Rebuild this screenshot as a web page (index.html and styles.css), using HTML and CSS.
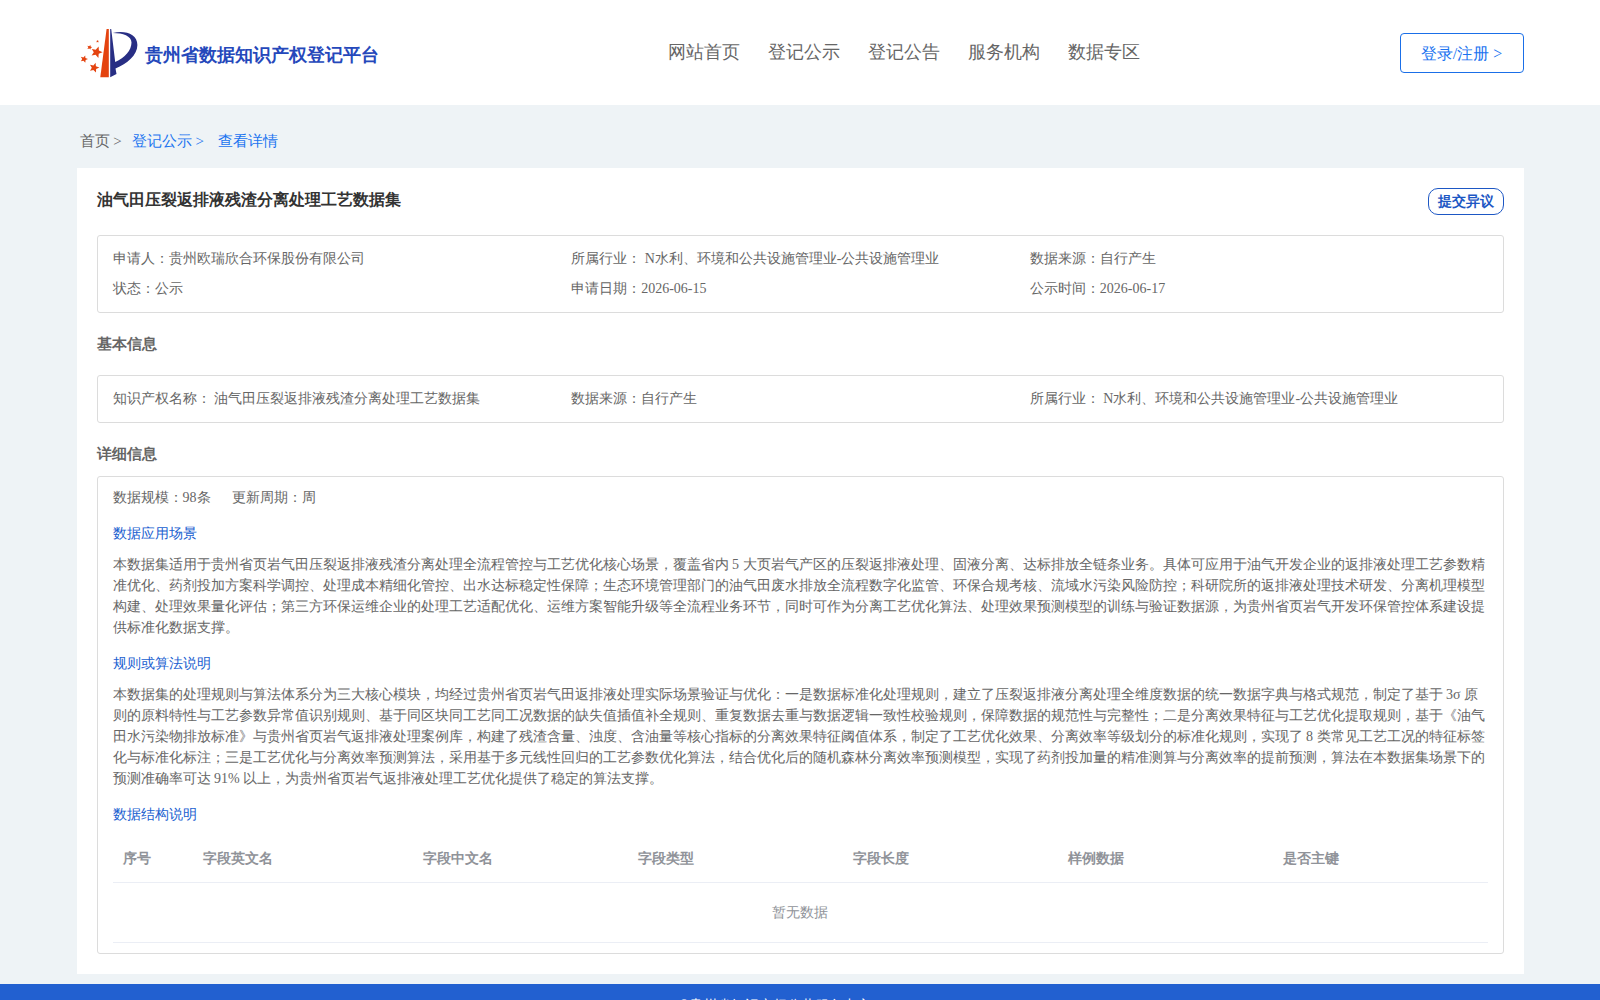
FILE: index.html
```html
<!DOCTYPE html>
<html lang="en">
<head>
  <meta charset="UTF-8">
  <title>贵州省数据知识产权登记平台</title>
  <meta name="viewport" content="width=device-width, initial-scale=1" />
  <link rel="stylesheet" href="styles.css">
</head>
<body>

<header class="header">
  <div class="header-inner">
    <a class="logo" href="#">
      <svg width="58" height="50" viewBox="0 0 58 50">
        <path fill="#e4430f" d="M26.6 1 L28.8 1 L28.8 49.3 L20.3 49.3 Z"/>
        <path fill="#282e84" d="M30.2 1 L31.2 1 L35.2 34 C45 30 51.5 22 51.5 14.5 C51.5 8 43 5 32.8 5 C45 2 57.4 6 57.4 17 C57.4 27 47 36 35.5 40.5 L36.5 46 L30.2 49.3 Z"/>
        <g fill="#e4430f">
          <path d="M18.6 18.4 L18.9 22.6 L22.6 24.2 L18.7 25.7 L18.4 30 L15.6 26.8 L11.6 27.6 L13.8 24.2 L11.8 20.9 L15.7 21.8 Z"/>
          <path d="M15.6 34.8 L15.9 38.2 L19.4 39.5 L16.1 40.9 L16 44.6 L13.4 41.9 L10 42.8 L11.8 39.7 L10 36.7 L13.4 37.5 Z"/>
          <path d="M5.2 27.4 L5.4 30 L8 31 L5.6 32.1 L5.3 34.8 L3.5 32.7 L.9 33.3 L2.2 31 L.8 28.8 L3.4 29.4 Z"/>
          <path d="M10.4 17 L10.6 18.6 L12.2 19.2 L10.7 20 L10.5 21.6 L9.3 20.4 L7.4 20.9 L8.3 19.3 L7.3 17.7 L9.1 18.2 Z"/>
          <path d="M17.6 12 L18 12.8 L19 13 L18.2 13.6 L18.4 14.4 L17.5 14 L16.6 14.4 L16.8 13.5 L16.2 12.9 L17.2 12.8 Z"/>
        </g>
      </svg>
      <span class="logo-text">贵州省数据知识产权登记平台</span>
    </a>
    <nav class="nav">
      <a href="#">网站首页</a>
      <a href="#">登记公示</a>
      <a href="#">登记公告</a>
      <a href="#">服务机构</a>
      <a href="#">数据专区</a>
    </nav>
    <a class="login" href="#">登录/注册 &gt;</a>
  </div>
</header>

<div class="crumbs">
  <span>首页 &gt;</span>
  <a href="#">登记公示 &gt;</a>
  <a class="current" href="#">查看详情</a>
</div>

<main class="card">
  <div class="title-row">
    <h1>油气田压裂返排液残渣分离处理工艺数据集</h1>
    <button class="objection">提交异议</button>
  </div>

  <div class="box grid">
    <div>申请人：贵州欧瑞欣合环保股份有限公司</div>
    <div>所属行业： N水利、环境和公共设施管理业-公共设施管理业</div>
    <div>数据来源：自行产生</div>
    <div>状态：公示</div>
    <div>申请日期：2026-06-15</div>
    <div>公示时间：2026-06-17</div>
  </div>

  <h2>基本信息</h2>
  <div class="box grid basic">
    <div>知识产权名称： 油气田压裂返排液残渣分离处理工艺数据集</div>
    <div>数据来源：自行产生</div>
    <div>所属行业： N水利、环境和公共设施管理业-公共设施管理业</div>
  </div>

  <h2>详细信息</h2>
  <div class="box detail">
    <div class="scale"><span>数据规模：98条</span><span>更新周期：周</span></div>

    <h3>数据应用场景</h3>
    <p>本数据集适用于贵州省页岩气田压裂返排液残渣分离处理全流程管控与工艺优化核心场景，覆盖省内 5 大页岩气产区的压裂返排液处理、固液分离、达标排放全链条业务。具体可应用于油气开发企业的返排液处理工艺参数精准优化、药剂投加方案科学调控、处理成本精细化管控、出水达标稳定性保障；生态环境管理部门的油气田废水排放全流程数字化监管、环保合规考核、流域水污染风险防控；科研院所的返排液处理技术研发、分离机理模型构建、处理效果量化评估；第三方环保运维企业的处理工艺适配优化、运维方案智能升级等全流程业务环节，同时可作为分离工艺优化算法、处理效果预测模型的训练与验证数据源，为贵州省页岩气开发环保管控体系建设提供标准化数据支撑。</p>

    <h3>规则或算法说明</h3>
    <p>本数据集的处理规则与算法体系分为三大核心模块，均经过贵州省页岩气田返排液处理实际场景验证与优化：一是数据标准化处理规则，建立了压裂返排液分离处理全维度数据的统一数据字典与格式规范，制定了基于 3σ 原则的原料特性与工艺参数异常值识别规则、基于同区块同工艺同工况数据的缺失值插值补全规则、重复数据去重与数据逻辑一致性校验规则，保障数据的规范性与完整性；二是分离效果特征与工艺优化提取规则，基于《油气田水污染物排放标准》与贵州省页岩气返排液处理案例库，构建了残渣含量、浊度、含油量等核心指标的分离效果特征阈值体系，制定了工艺优化效果、分离效率等级划分的标准化规则，实现了 8 类常见工艺工况的特征标签化与标准化标注；三是工艺优化与分离效率预测算法，采用基于多元线性回归的工艺参数优化算法，结合优化后的随机森林分离效率预测模型，实现了药剂投加量的精准测算与分离效率的提前预测，算法在本数据集场景下的预测准确率可达 91% 以上，为贵州省页岩气返排液处理工艺优化提供了稳定的算法支撑。</p>

    <h3>数据结构说明</h3>
    <table class="fields">
      <thead>
        <tr>
          <th class="col-no">序号</th>
          <th class="col-en">字段英文名</th>
          <th>字段中文名</th>
          <th>字段类型</th>
          <th>字段长度</th>
          <th>样例数据</th>
          <th>是否主键</th>
        </tr>
      </thead>
      <tbody>
        <tr><td class="empty" colspan="7">暂无数据</td></tr>
      </tbody>
    </table>
  </div>
</main>

<footer class="footer">©贵州省知识产权公共服务中心</footer>

</body>
</html>
```
FILE: styles.css
```css
* {
  box-sizing: border-box;
}
body {
  margin: 0;
  height: 1000px;
  overflow: hidden;
  font-family: "Liberation Serif", serif;
  font-size: 14px;
  background: #eef3f6;
  color: #666;
}
a {
  text-decoration: none;
}
.header {
  background: #fff;
}
.header-inner {
  display: flex;
  align-items: center;
  width: 1447px;
  height: 105px;
  margin: 0 auto;
  padding-left: 3px;
}
.logo {
  display: flex;
  width: 588px;
  gap: 7px;
  align-items: center;
}
.logo-text {
  padding-top: 4px;
  font-size: 18px;
  font-weight: bold;
  color: #2548bb;
}
.nav {
  display: flex;
  gap: 28px;
  padding-bottom: 2px;
}
.nav a {
  font-size: 18px;
  line-height: 24px;
  color: #666;
}
.login {
  width: 124px;
  height: 40px;
  margin-left: auto;
  border: 1px solid #1a6fe8;
  border-radius: 4px;
  font-size: 16px;
  line-height: 40px;
  text-align: center;
  color: #1a73f0;
}
.crumbs {
  display: flex;
  width: 1447px;
  height: 63px;
  margin: 0 auto;
  padding: 10px 3px 0;
  align-items: center;
  font-size: 15px;
}
.crumbs a {
  margin-left: 10px;
  color: #1a73f0;
}
.crumbs .current {
  margin-left: 14px;
}
.card {
  width: 1447px;
  height: 806px;
  margin: 0 auto;
  padding: 20px 20px 0;
  background: #fff;
}
.title-row {
  display: flex;
  height: 47px;
  justify-content: space-between;
  align-items: flex-start;
}
h1 {
  margin: 0;
  font-size: 16px;
  line-height: 24px;
  color: #333;
}
.objection {
  width: 76px;
  height: 27px;
  padding: 0;
  border: 1px solid #1d57c4;
  border-radius: 10px;
  background: #fff;
  font: bold 14px "Liberation Serif", serif;
  color: #1d57c4;
}
.box {
  border: 1px solid #dcdcdc;
  border-radius: 3px;
  padding: 8px 15px;
}
.grid {
  display: grid;
  grid-template-columns: repeat(3, 1fr);
  padding-right: 14px;
  line-height: 30px;
}
h2 {
  margin: 0;
  height: 62px;
  font-size: 15px;
  line-height: 63px;
}
.basic + h2 {
  height: 53px;
}
.detail {
  height: 478px;
  padding-top: 6px;
}
.scale {
  display: flex;
  gap: 21px;
  line-height: 30px;
}
h3 {
  margin: 10px 0;
  font-size: 14px;
  font-weight: normal;
  line-height: 21px;
  color: #2060d0;
}
.detail p {
  margin: 0 0 15px;
  line-height: 21px;
}
.fields {
  width: 100%;
  border-collapse: collapse;
  table-layout: fixed;
  color: #909399;
}
.fields th {
  height: 47px;
  padding: 2px 10px 0;
  text-align: left;
  border-bottom: 1px solid #ebeef5;
}
.fields .col-no {
  width: 80px;
}
.fields .col-en {
  width: 220px;
}
.fields .empty {
  height: 60px;
  padding: 2px 0 0;
  text-align: center;
  border-bottom: 1px solid #ebeef5;
}
.footer {
  height: 60px;
  margin-top: 10px;
  padding: 12px 50px 0 0;
  background: #2260d0;
  line-height: 20px;
  text-align: center;
  color: #fff;
}
```
